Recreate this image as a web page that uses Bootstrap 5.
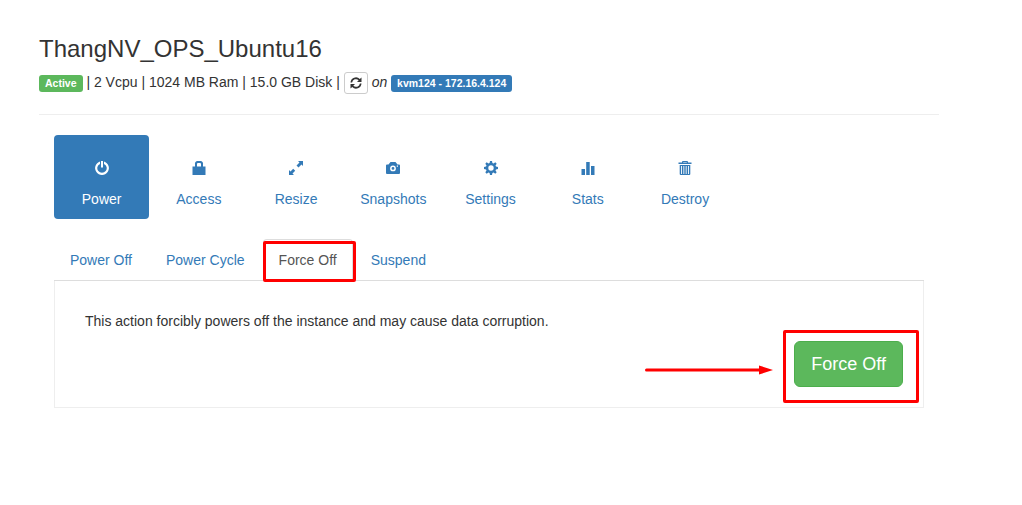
<!DOCTYPE html>
<html lang="en">
<head>
<meta charset="utf-8">
<meta name="viewport" content="width=device-width, initial-scale=1">
<title>ThangNV_OPS_Ubuntu16</title>
<link href="https://cdn.jsdelivr.net/npm/bootstrap@5.3.0/dist/css/bootstrap.min.css" rel="stylesheet">
<style>
body { font-family: "Liberation Sans", Arial, sans-serif; font-size: 14px; line-height: 20px; color: #333; background: #fff; }
a { color: #337ab7; }
.instance { padding: 36px 83px 40px 39px; }
.instance-name { font-size: 24px; line-height: 26px; margin-bottom: 10px; font-weight: 400; }
.instance-info { height: 22px; }
.instance-info .badge { padding: 3px 6px; line-height: 11px; border-radius: 3px; }
.bg-active { background: #5cb85c; }
.bg-host { background: #337ab7; }
.btn-refresh { padding: 0 5px; height: 22px; line-height: 18px; border: 1px solid #ccc; border-radius: 3px; color: #333; vertical-align: middle; }
.rule { margin: 20px 0; border-top: 1px solid #eee; opacity: 1; }
svg { display: block; fill: currentColor; }
.instance-body { padding: 0 15px; }
.actions { width: 78%; gap: 2px; --bs-nav-pills-border-radius: 4px; --bs-nav-pills-link-active-bg: #337ab7; }
.actions .nav-link { color: #337ab7; padding: 26px 0 10px; }
.actions .nav-link.active { color: #fff; }
.actions svg { margin: 0 auto 14px; }
.power-tabs { margin-top: 20px; gap: 2px; --bs-nav-tabs-border-color: #ddd; --bs-nav-tabs-border-radius: 4px; }
.power-tabs .nav-link { color: #337ab7; padding: 10px 15px; }
.power-tabs .nav-link.active { color: #555; border-color: #ddd #ddd #fff; }
.power-panel { border: 1px solid #eee; border-top: 0; padding: 30px 20px 20px 30px; }
.power-panel p { margin-bottom: 10px; }
.btn-force { font-size: 18px; line-height: 24px; padding: 10px 16px; color: #fff; background: #5cb85c; border: 1px solid #4cae4c; border-radius: 6px; }
.callout-box { position: absolute; border: 3px solid #f00; border-radius: 2px; pointer-events: none; }
.callout-tab { inset: 2px -3px -2px 0; z-index: 2; }
.callout-button { inset: -11px -16px -16px -11px; }
.callout-arrow { position: absolute; right: 130px; top: 24px; fill: #f00; }
</style>
</head>
<body>
<main class="instance">
  <h1 class="instance-name">ThangNV_OPS_Ubuntu16</h1>
  <div class="instance-info text-nowrap">
    <span class="badge bg-active">Active</span> | 2 Vcpu | 1024 MB Ram | 15.0 GB Disk |
    <button type="button" class="btn btn-refresh" aria-label="Refresh"><svg width="12" height="12" viewBox="0 0 12 12"><path d="M.5 5.500A5.400 5.400 0 0 1 9.800 2.100L11.500.5V5H7l1.700-1.700A3.900 3.900 0 0 0 2.100 5.500zM11.500 6.500A5.400 5.400 0 0 1 2.200 9.900L.5 11.500V7H5L3.300 8.700A3.900 3.900 0 0 0 9.900 6.500z"/></svg></button>
    <em>on</em> <span class="badge bg-host">kvm124 - 172.16.4.124</span>
  </div>
  <hr class="rule">
  <div class="instance-body">
    <nav class="nav nav-pills nav-justified actions flex-nowrap" aria-label="Instance actions">
      <a class="nav-link active" href="#power" aria-current="page"><svg width="14" height="14" viewBox="0 0 14 14"><path d="M6 0h2v6.500H6z"/><path d="M5 .5v2.400a4.700 4.700 0 1 0 4 0V.5a6.900 6.900 0 1 1-4 0z"/></svg>Power</a>
      <a class="nav-link" href="#access"><svg width="14" height="14" viewBox="0 0 14 14"><path d="M.5 5.500H3V3A2.500 2.500 0 0 1 5.500 0h3A2.500 2.500 0 0 1 11 3v2.500h2.500V14H.5zM5 5.500h4V3a1 1 0 0 0-1-1H6a1 1 0 0 0-1 1z"/></svg>Access</a>
      <a class="nav-link" href="#resize"><svg width="14" height="14" viewBox="0 0 14 14"><path d="M14 0v5l-1.500-1.500-3 3-2-2 3-3L9 0zM0 14V9l1.500 1.500 2.700-2.700 2 2-2.700 2.700L5 14z"/></svg>Resize</a>
      <a class="nav-link" href="#snapshots"><svg width="14" height="14" viewBox="0 0 14 14"><path fill-rule="evenodd" d="M0 4.500a1 1 0 0 1 1-1h1.500L4.500 1h5l2 2.500H13a1 1 0 0 1 1 1V12a1 1 0 0 1-1 1H1a1 1 0 0 1-1-1zM7 4.500a2.900 2.900 0 1 0 0 5.800 2.900 2.900 0 0 0 0-5.800zM7 6a1.400 1.400 0 1 1 0 2.800A1.400 1.400 0 0 1 7 6zM10.800 4.600v1.200H12V4.600z"/></svg>Snapshots</a>
      <a class="nav-link" href="#settings"><svg width="14" height="14" viewBox="0 0 14 14"><path fill-rule="evenodd" d="M6 0h2l.4 2 1.200.5L11.300 1.300l1.400 1.400-1.200 1.700.5 1.200 2 .4v2l-2 .4-.5 1.200 1.200 1.700-1.400 1.400-1.700-1.200-1.200.5L8 14H6l-.4-2-1.200-.5-1.700 1.200-1.400-1.400 1.200-1.700L2 8.400 0 8V6l2-.4.5-1.200-1.200-1.700 1.400-1.400 1.700 1.200L5.600 2zM7 4.300a2.700 2.700 0 1 0 0 5.400 2.700 2.700 0 0 0 0-5.400z"/></svg>Settings</a>
      <a class="nav-link" href="#stats"><svg width="14" height="14" viewBox="0 0 14 14"><path d="M.5 8H4v6H.5zM5.200 1h3.500v13H5.200zM10 5h3.500v9H10z"/></svg>Stats</a>
      <a class="nav-link" href="#destroy"><svg width="14" height="14" viewBox="0 0 14 14"><path fill-rule="evenodd" d="M5 0h4a1 1 0 0 1 1 1v.6h3.500V3H.5V1.600H4V1a1 1 0 0 1 1-1zm.2 1v.6h3.600V1zM1.700 4h10.600v9a1 1 0 0 1-1 1H2.700a1 1 0 0 1-1-1zM3 5v8h.9V5zM5.400 5v8h.9V5zM7.700 5v8h.9V5zM10.100 5v8h.9V5z"/></svg>Destroy</a>
    </nav>
    <ul class="nav nav-tabs power-tabs">
      <li class="nav-item"><a class="nav-link" href="#poweroff">Power Off</a></li>
      <li class="nav-item"><a class="nav-link" href="#powercycle">Power Cycle</a></li>
      <li class="nav-item position-relative"><a class="nav-link active" href="#forceoff">Force Off</a><span class="callout-box callout-tab"></span></li>
      <li class="nav-item"><a class="nav-link" href="#suspend">Suspend</a></li>
    </ul>
    <section class="power-panel" id="forceoff">
      <p>This action forcibly powers off the instance and may cause data corruption.</p>
      <div class="d-flex justify-content-end">
        <div class="position-relative">
          <button type="button" class="btn btn-force d-block">Force Off</button>
          <span class="callout-box callout-button"></span>
          <svg class="callout-arrow" width="128" height="10" viewBox="0 0 128 10"><path d="M1.500 3.500H114V.5L128 5l-14 4.500v-3H1.500a1.500 1.500 0 0 1 0-3z"/></svg>
        </div>
      </div>
    </section>
  </div>
</main>
<script src="https://cdn.jsdelivr.net/npm/bootstrap@5.3.0/dist/js/bootstrap.bundle.min.js"></script>
</body>
</html>
